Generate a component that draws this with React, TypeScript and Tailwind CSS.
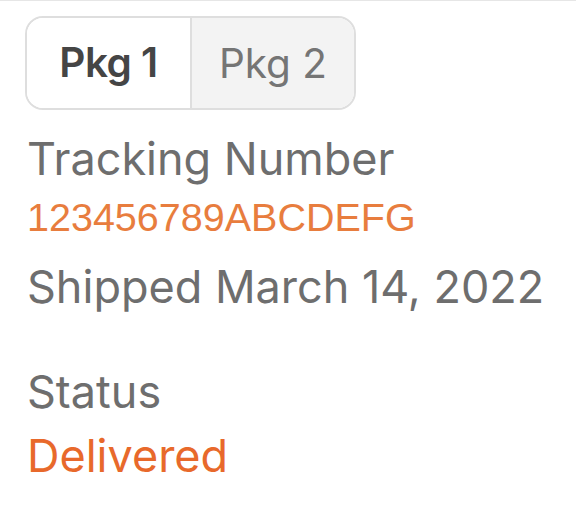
export default function App() {
  return (
    <div className="w-[576px] h-[509px] bg-white border-t border-[#e6e6e6] overflow-hidden" style={{ fontFamily: "Inter, 'Noto Sans', sans-serif" }}>
      <div className="pl-[25px] pt-[15px]">
        <div className="flex w-[331px] h-[94px] rounded-[18px] border-2 border-[#dedede] overflow-hidden">
          <div className="w-[163px] flex items-center justify-center bg-white text-[#454545] text-[40.5px] font-semibold tracking-[-0.5px]">Pkg 1</div>
          <div className="flex-1 flex items-center justify-center pt-[3px] bg-[#f3f3f3] border-l-2 border-[#dedede] text-[#757575] text-[40.5px]">Pkg 2</div>
        </div>
        <div className="mt-[23px] pl-[2px] text-[#6e6e6e] text-[45px] leading-[52px]">Tracking Number</div>
        <div className="mt-[7px] pl-[2px] text-[#e87d3e] text-[39.5px] leading-[50px]" style={{ fontFamily: "'Liberation Sans', Arial, sans-serif" }}>123456789ABCDEFG</div>
        <div className="mt-[19px] pl-[2px] text-[#6e6e6e] text-[45px] leading-[52px]">Shipped March 14, 2022</div>
        <div className="mt-[53px] pl-[2px] text-[#6e6e6e] text-[45px] leading-[52px]">Status</div>
        <div className="mt-[12px] pl-[2px] text-[#e8692b] text-[45px] leading-[52px]">Delivered</div>
      </div>
    </div>
  );
}
